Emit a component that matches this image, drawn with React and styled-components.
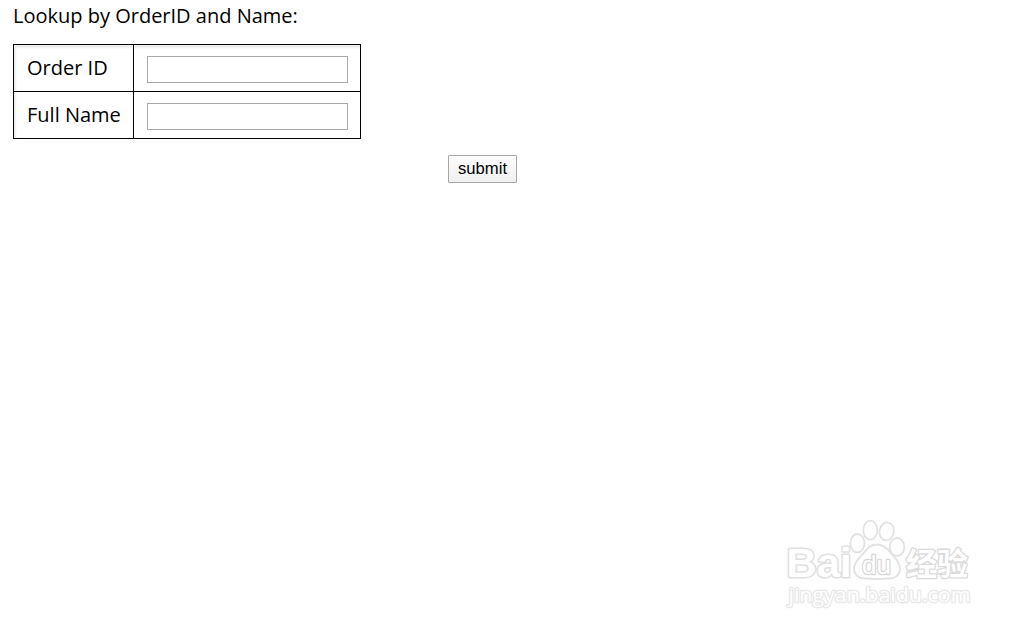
import React from "react";
import styled, { createGlobalStyle } from "styled-components";

const GlobalStyle = createGlobalStyle`
  * {
    box-sizing: border-box;
  }

  body {
    margin: 0;
    background: #fff;
    color: #000;
    font-family: "Open Sans", sans-serif;
    font-size: 20px;
    line-height: 30px;
    overflow: hidden;
  }
`;

const Page = styled.main`
  position: relative;
  height: 631px;
  padding: 1px 0 0 13px;
`;

const Heading = styled.p`
  margin: 0 0 13px;
`;

const LookupTable = styled.table`
  width: 348px;
  border-collapse: collapse;
  table-layout: fixed;
  box-shadow: inset 3px 4px 2px #eee;
`;

const Row = styled.tr`
  height: 47px;
`;

const Cell = styled.td`
  width: ${({ $width }) => $width}px;
  padding: 0 0 0 13px;
  border: 1px solid #000;
  vertical-align: middle;
  white-space: nowrap;
`;

const TextInput = styled.input`
  display: block;
  width: 201px;
  height: 27px;
  margin: 2px 0 0;
  padding: 1px 4px;
  border: 1px solid #a9a9a9;
  border-radius: 0;
  background: #fff;
  font: 16px "Liberation Sans", sans-serif;
  outline: none;
`;

const Actions = styled.div`
  display: flex;
  justify-content: center;
  width: 939px;
  margin-top: 16px;
`;

const SubmitButton = styled.button`
  width: 69px;
  height: 28px;
  padding: 0 0 1px;
  border: 1px solid #a6a6a6;
  border-radius: 1px;
  background: linear-gradient(#fcfcfc, #f0f0f0);
  color: #000;
  font: 16.67px "Liberation Sans", sans-serif;
`;

const Watermark = styled.svg`
  position: absolute;
  left: 780px;
  top: 510px;
  fill: #fff;
  stroke: #e2e2e2;
  stroke-width: 1.8;
  stroke-linejoin: round;
  pointer-events: none;
`;

const MarkText = styled.text`
  font-family: ${({ $family }) => $family}, sans-serif;
  font-size: ${({ $size }) => $size}px;
  font-weight: ${({ $weight }) => $weight || 400};
  stroke: ${({ $color }) => $color || "#e8e8e8"};
  stroke-width: ${({ $stroke }) => $stroke || 2.6}px;
  paint-order: stroke;
`;

const fields = [
  { name: "orderId", label: "Order ID" },
  { name: "fullName", label: "Full Name" },
];

const BaiduMark = () => (
  <Watermark width="200" height="105" viewBox="0 0 200 105">
    <MarkText x="6.500" y="67" textLength="65" lengthAdjust="spacingAndGlyphs" $family='"Liberation Sans"' $size={40} $weight={700} $stroke={3} $color="#e0e0e0">
      Bai
    </MarkText>
    <ellipse cx="77.4" cy="33.2" rx="7.1" ry="9.2" />
    <ellipse cx="90.3" cy="20.2" rx="7" ry="9.5" />
    <ellipse cx="106.6" cy="21.4" rx="7.2" ry="9" transform="rotate(10 106.6 21.4)" />
    <ellipse cx="117" cy="37" rx="7.3" ry="9" />
    <path d="M97 34.500c-6 0-9 3-12.500 7.500-4 5-10.500 9-10.500 16.500 0 6.500 4.500 10 10.500 10 4.500 0 8 .5 12.500 .5s8-.5 12.500-.5c6 0 10.500-3.500 10.500-10 0-7-6-11.500-10-16.500-3.500-4.500-7-7.500-13-7.500z" />
    <MarkText x="82" y="63.500" textLength="29" lengthAdjust="spacingAndGlyphs" $family='"Liberation Sans"' $size={26} $stroke={2.4} $color="#d6d6d6">
      du
    </MarkText>
    <MarkText x="126" y="64.500" textLength="62" lengthAdjust="spacingAndGlyphs" $family='"Noto Sans CJK SC"' $size={31} $weight={700} $color="#dadada">
      经验
    </MarkText>
    <MarkText x="8.500" y="91.500" textLength="182" lengthAdjust="spacingAndGlyphs" $family='"Open Sans"' $size={20.5}>
      jingyan.baidu.com
    </MarkText>
  </Watermark>
);

const App = () => {
  return (
    <>
      <GlobalStyle />
      <Page>
        <Heading>Lookup by OrderID and Name:</Heading>
        <LookupTable>
          <tbody>
            {fields.map(({ name, label }) => (
              <Row key={name}>
                <Cell $width={120}>{label}</Cell>
                <Cell $width={227}>
                  <TextInput name={name} aria-label={label} />
                </Cell>
              </Row>
            ))}
          </tbody>
        </LookupTable>
        <Actions>
          <SubmitButton type="button">submit</SubmitButton>
        </Actions>
        <BaiduMark />
      </Page>
    </>
  );
};

export default App;
